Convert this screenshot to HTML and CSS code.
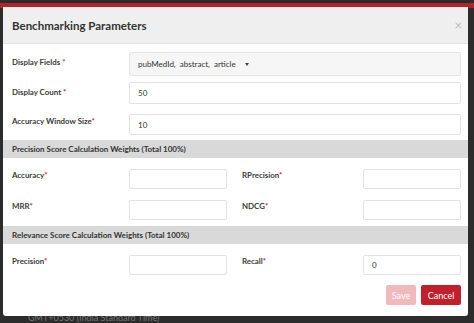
FILE: index.html
```html
<!DOCTYPE html>
<html lang="en">
<head>
  <meta charset="UTF-8">
  <title>Benchmarking Parameters</title>
  <link rel="stylesheet" href="styles.css">
</head>
<body>

<div class="topbar"></div>
<div class="behind">GMT+0530 (India Standard Time)</div>

<div class="modal">
  <div class="modal-header">
    <h3>Benchmarking Parameters</h3>
    <span class="close">&times;</span>
  </div>

  <div class="modal-body">
    <div class="row first">
      <label>Display Fields <span class="req">*</span></label>
      <div class="select">pubMedId, &nbsp;abstract, &nbsp;article <span class="caret"></span></div>
    </div>
    <div class="row count">
      <label>Display Count <span class="req">*</span></label>
      <input type="text" value="50">
    </div>
    <div class="row window">
      <label>Accuracy Window Size<span class="req">*</span></label>
      <input type="text" value="10">
    </div>

    <div class="section">Precision Score Calculation Weights (Total 100%)</div>

    <div class="row half">
      <label>Accuracy<span class="req">*</span></label>
      <input type="text">
      <label class="second">RPrecision<span class="req">*</span></label>
      <input type="text">
    </div>
    <div class="row half last">
      <label>MRR<span class="req">*</span></label>
      <input type="text">
      <label class="second">NDCG<span class="req">*</span></label>
      <input type="text">
    </div>

    <div class="section">Relevance Score Calculation Weights (Total 100%)</div>

    <div class="row half">
      <label>Precision<span class="req">*</span></label>
      <input type="text">
      <label class="second">Recall<span class="req">*</span></label>
      <input type="text" value="0">
    </div>

    <div class="footer">
      <button class="btn save" disabled>Save</button>
      <button class="btn cancel">Cancel</button>
    </div>
  </div>
</div>

</body>
</html>
```

FILE: styles.css
```css
* {
  box-sizing: border-box;
}

body {
  margin: 0;
  padding: 7px 6px 0 3px;
  background: #2c2c2c;
  font-family: Lato, 'Open Sans', sans-serif;
  color: #333;
  height: 323px;
  overflow: hidden;
  position: relative;
}

.topbar {
  position: absolute;
  top: 3px;
  left: 0;
  right: 0;
  height: 5px;
  background: #b4222b;
}

.behind {
  position: absolute;
  left: 28px;
  top: 312px;
  font-size: 9px;
  line-height: 11px;
  color: #777;
}

.modal {
  position: relative;
  background: white;
  border-radius: 0 0 3px 3px;
  height: 309px;
}

.modal-header {
  background: #efefef;
  height: 37px;
  padding: 0 9px;
  display: flex;
  align-items: center;
  justify-content: space-between;
  border-bottom: 1px solid #e2e2e2;
}

.modal-header h3 {
  margin: 0;
  font-size: 11.5px;
  font-weight: 700;
  color: #333;
}

.close {
  font-size: 13px;
  color: #bbb;
  margin-right: -3px;
}

.modal-body {
  padding: 8px 7px 0 9px;
}

.row {
  display: flex;
  align-items: flex-start;
  margin-bottom: 6px;
}

.row label {
  width: 117px;
  flex-shrink: 0;
  font-size: 7.9px;
  font-weight: 700;
  color: #3a3a3a;
  padding-top: 5px;
}

.req {
  color: #c62631;
}

.row input,
.select {
  flex: 1;
  min-width: 0;
  height: 22px;
  border: 1px solid #e3e3e3;
  border-radius: 2px;
  padding: 0 8px;
  font-family: inherit;
  font-size: 8px;
  color: #333;
  background: white;
  outline: none;
}

.select {
  background: #f6f6f6;
  height: 24px;
  display: flex;
  align-items: center;
}

.caret {
  display: inline-block;
  margin-left: 9px;
  border-left: 2.5px solid transparent;
  border-right: 2.5px solid transparent;
  border-top: 3px solid #444;
}

.row.count {
  margin-bottom: 10px;
}

.row.window input {
  height: 21px;
}

.row.window {
  margin-bottom: 5px;
}

.row.window label {
  padding-top: 2px;
}

.row.half {
  margin-bottom: 11px;
}

.row.half.last {
  margin-bottom: 6px;
}

.row.half label {
  padding-top: 1px;
}

.row.half input {
  flex: 0 0 98px;
  width: 98px;
  height: 20px;
}

.row.half label.second {
  width: 121px;
  margin-left: 15px;
}

.section {
  background: #d9d9d9;
  margin: 0 -7px 11px -9px;
  padding: 0 9px;
  height: 18px;
  line-height: 18px;
  font-size: 8px;
  font-weight: 700;
  color: #333;
}

.footer {
  display: flex;
  justify-content: flex-end;
  gap: 5px;
  margin-top: -1px;
}

.btn {
  border: none;
  border-radius: 2px;
  height: 20px;
  font-family: inherit;
  font-size: 9px;
  color: white;
  padding: 0;
}

.save {
  background: #f2b9bd;
  width: 30px;
}

.cancel {
  background: #c1202a;
  width: 40px;
}
```
